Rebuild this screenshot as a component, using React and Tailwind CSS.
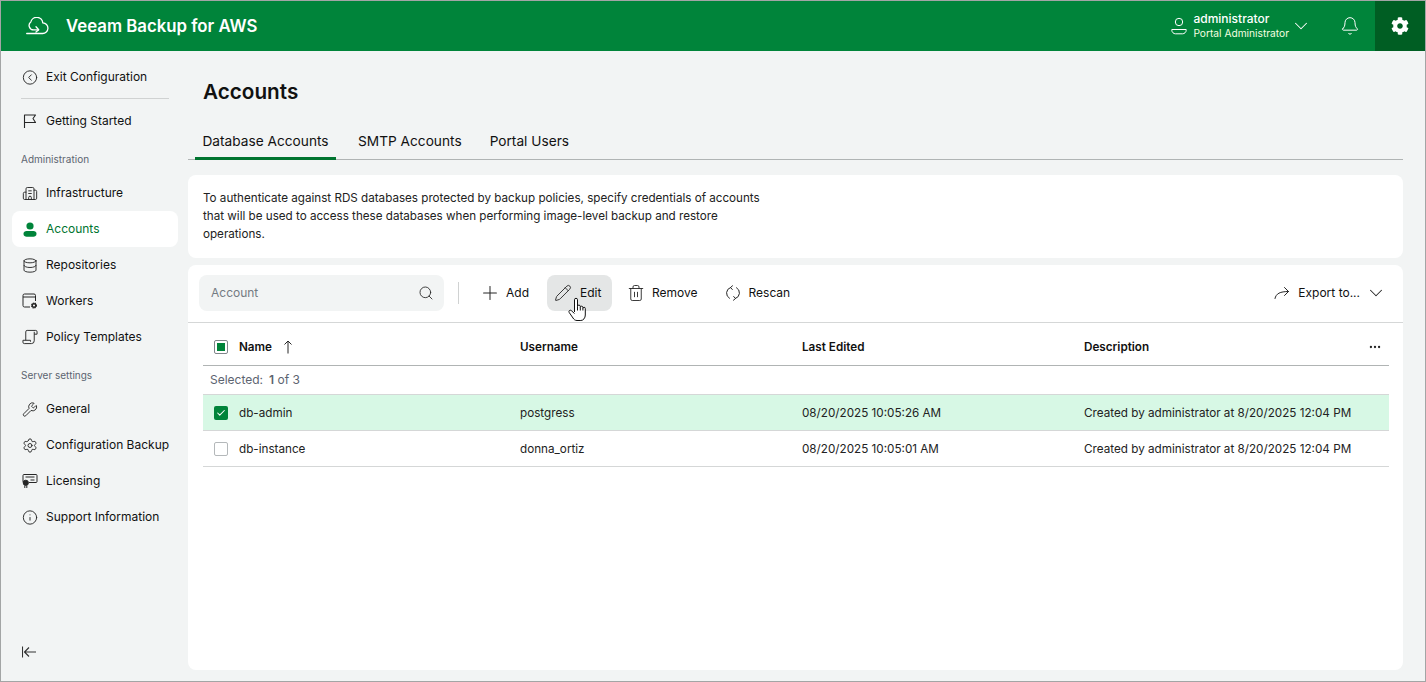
import React from "react";
import {
  Bell,
  Building2,
  Check,
  ChevronDown,
  CircleChevronLeft,
  Database,
  Ellipsis,
  Info,
  Pencil,
  Plus,
  Search,
  Settings,
  Trash2,
  Wrench,
} from "lucide-react";
import { FaCog } from "react-icons/fa";

// Icons the packages don't have in the right shape
const CloudLogo = () => (
  <svg width="23" height="18" viewBox="0 0 23 18" fill="none" stroke="white" strokeWidth="1.300" strokeLinecap="round" strokeLinejoin="round">
    <path d="M.7 16.500H16.500a5.300 5.300 0 0 0 .3-10.600 6.100 6.100 0 0 0-12-1 4.500 4.500 0 0 0 3 8h4.700" />
    <path d="M10 9.800l2.700 3-2.700 2.200" />
  </svg>
);

const FlagIcon = () => (
  <svg width="16" height="16" viewBox="0 0 16 16" fill="none" stroke="#262626" strokeWidth="1.100" strokeLinejoin="round">
    <path d="M2.500 15V2h11l-2.500 3.500 2.500 4h-11" />
  </svg>
);

const PersonFilled = () => (
  <svg width="14" height="15" viewBox="0 0 14 15" fill="#00843a">
    <circle cx="7" cy="4" r="3.600" />
    <path d="M.5 11.500c0-1.600 1.400-2.500 3-2.500h7c1.600 0 3 .9 3 2.500v.5c0 1.700-1.600 2.800-3 2.800h-7c-1.400 0-3-1.100-3-2.800z" />
  </svg>
);

const PersonOutline = () => (
  <svg width="16" height="18" viewBox="0 0 16 18" fill="none" stroke="white" strokeWidth="1">
    <circle cx="8" cy="5" r="3.700" />
    <path d="M.8 12.500h14.400v.7c0 2-1.800 3.600-3.600 3.600H4.400c-1.800 0-3.600-1.600-3.600-3.600z" />
  </svg>
);

const WorkerIcon = () => (
  <svg width="16" height="16" viewBox="0 0 16 16" fill="none" stroke="#262626" strokeWidth="1">
    <path d="M8 14H2.500A1.500 1.500 0 0 1 1 12.500v-10A1.500 1.500 0 0 1 2.500 1h9.500A1.500 1.500 0 0 1 13.500 2.500V8" />
    <path d="M1 4h12.500" />
    <circle cx="12" cy="12.500" r="2.400" fill="#262626" strokeWidth="1.200" strokeDasharray="1.200 .6" />
    <circle cx="12" cy="12.500" r="1" fill="white" stroke="none" />
  </svg>
);

const PolicyIcon = () => (
  <svg width="17" height="16" viewBox="0 0 17 16" fill="none" stroke="#262626" strokeWidth="1" strokeLinejoin="round">
    <path d="M4 11.500V2.500A1.500 1.500 0 0 1 5.500 1h9a1.500 1.500 0 0 1 1.500 1.500V5h-3" />
    <path d="M13 2.500V12a3 3 0 0 1-3 3H2.500A1.500 1.500 0 0 1 1 13.500v-2h8v1.500" />
  </svg>
);

const LicenseIcon = () => (
  <svg width="16" height="16" viewBox="0 0 16 16" fill="none" stroke="#262626" strokeWidth="1">
    <path d="M3 9.500H2A1 1 0 0 1 1 8.500v-6a1 1 0 0 1 1-1h12a1 1 0 0 1 1 1v6a1 1 0 0 1-1 1H7" />
    <path d="M3.500 4h9M8.500 7h4" />
    <circle cx="3.800" cy="9.800" r="2.600" fill="#262626" />
    <path d="M2.800 12.500V15M4.800 12.500V15" />
  </svg>
);

const ExportIcon = () => (
  <svg width="16" height="14" viewBox="0 0 16 14" fill="none" stroke="#262626" strokeWidth="1" strokeLinecap="round" strokeLinejoin="round">
    <path d="M1 12.500C2 7.500 6 5.500 14.500 5.500" />
    <path d="M10.500 1.500l4 4-4 4" />
  </svg>
);

const RescanIcon = () => (
  <svg width="16" height="16" viewBox="0 0 16 16" fill="none" stroke="#262626" strokeWidth="1" strokeLinecap="round" strokeLinejoin="round">
    <path d="M4.500 13.300A6 6 0 0 1 5.500 2.500" />
    <path d="M11.500 2.700a6 6 0 0 1-1 10.800" />
    <path d="M7.500.8 5.500 2.500l1.800 2" />
    <path d="M8.500 15.200l2-1.700-1.800-2" />
  </svg>
);

const CollapseIcon = () => (
  <svg width="14" height="12" viewBox="0 0 14 12" fill="none" stroke="#333" strokeWidth="1.100" strokeLinejoin="round">
    <path d="M.5 .5v11" />
    <path d="M7 1.500 2.500 6 7 10.500M2.500 6H14" />
  </svg>
);

const SortArrow = () => (
  <svg width="10" height="14" viewBox="0 0 10 14" fill="none" stroke="#262626" strokeWidth="1">
    <path d="M5 13.500V1M1.500 4.500 5 1l3.500 3.500" />
  </svg>
);

const HandCursor = ({ className }) => (
  <svg className={className} width="19" height="25" viewBox="0 0 19 25" fill="white" stroke="#111" strokeWidth="1" strokeLinejoin="round">
    <path d="M6.500 15V2.800a1.500 1.500 0 0 1 3 0V9.500a1.400 1.400 0 0 1 2.800 0v1a1.300 1.300 0 0 1 2.600 0v1a1.200 1.200 0 0 1 2.400 0V18c0 3-2 5.500-4.500 5.500H9c-2 0-3-1-4-2.500L1.200 15.500c-1-1.500.8-3 2-2l3.300 3" />
    <path d="M9.500 9.500v4M12.300 10.500v3M14.900 11.500v2" fill="none" />
  </svg>
);

const ic = { size: 17, strokeWidth: 1.400, color: "#262626" };

const NavItem = ({ icon, label, active }) => (
  <div
    className={`flex h-9 items-center gap-2 rounded-lg pl-[10px] whitespace-nowrap ${
      active ? "bg-white text-[#00742f]" : "text-[#111]"
    }`}
  >
    <span className="flex w-4 justify-center">{icon}</span>
    <span>{label}</span>
  </div>
);

const SectionLabel = ({ children, className }) => (
  <div className={`pl-[9px] text-[10px] leading-4 text-[#5c6470] ${className}`}>{children}</div>
);

const ToolButton = ({ icon, label, active, className = "" }) => (
  <div
    className={`flex h-9 items-center gap-2 rounded-lg px-[9px] text-[#111] ${
      active ? "bg-[#e4e6e6]" : ""
    } ${className}`}
  >
    {icon}
    <span>{label}</span>
  </div>
);

const Row = ({ name, username, edited, description, selected }) => (
  <div
    className={`grid h-9 grid-cols-[317px_282px_282px_1fr] items-center border-b border-[#d5d7d7] text-[11.7px] text-[#222] ${
      selected ? "bg-[#d7f8e5]" : ""
    }`}
  >
    <div className="flex items-center gap-[11px] pl-[11px]">
      {selected ? (
        <span className="flex size-[14px] items-center justify-center rounded-[2px] bg-[#00843a]">
          <Check size={10} color="white" strokeWidth={2.500} />
        </span>
      ) : (
        <span className="size-[14px] rounded-[2px] border border-[#b4b8ba] bg-white" />
      )}
      <span>{name}</span>
    </div>
    <div>{username}</div>
    <div>{edited}</div>
    <div>{description}</div>
  </div>
);

export default function App() {
  return (
    <div className="flex h-[682px] w-[1426px] flex-col overflow-hidden border border-[#a3a5a5] bg-[#f2f4f4] font-['Inter',sans-serif] text-[12px] leading-4">
      {/* Top bar */}
      <header className="flex h-[50px] shrink-0 items-center bg-[#00843a] text-white">
        <span className="ml-[25px]">
          <CloudLogo />
        </span>
        <span className="ml-[17px] text-[16.8px] font-semibold">Veeam Backup for AWS</span>
        <div className="ml-auto flex h-full items-center">
          <PersonOutline />
          <div className="ml-[6px] flex flex-col">
            <span className="text-[12px] leading-[15px] font-medium">administrator</span>
            <span className="text-[10.2px] leading-[15px] text-[#f4ffe0]">Portal Administrator</span>
          </div>
          <ChevronDown className="ml-px" size={22} strokeWidth={1.100} color="white" />
          <Bell className="ml-[28px]" size={20} strokeWidth={1.200} color="white" />
          <div className="ml-[15px] flex h-full w-[50px] items-center justify-center bg-[#005e23]">
            <FaCog size={18} color="white" />
          </div>
        </div>
      </header>

      <div className="flex min-h-0 flex-1">
        {/* Sidebar */}
        <aside className="flex w-[187px] shrink-0 flex-col pt-2 pr-[10px] pb-[23px] pl-[11px]">
          <NavItem icon={<CircleChevronLeft {...ic} />} label="Exit Configuration" />
          <div className="mx-[9px] mt-[3px] border-t border-[#d0d2d2]" />
          <div className="mt-1">
            <NavItem icon={<FlagIcon />} label="Getting Started" />
          </div>
          <SectionLabel className="mt-3 mb-2">Administration</SectionLabel>
          <NavItem icon={<Building2 {...ic} />} label="Infrastructure" />
          <NavItem icon={<PersonFilled />} label="Accounts" active />
          <NavItem icon={<Database {...ic} />} label="Repositories" />
          <NavItem icon={<WorkerIcon />} label="Workers" />
          <NavItem icon={<PolicyIcon />} label="Policy Templates" />
          <SectionLabel className="mt-3 mb-2">Server settings</SectionLabel>
          <NavItem icon={<Wrench {...ic} />} label="General" />
          <NavItem icon={<Settings {...ic} />} label="Configuration Backup" />
          <NavItem icon={<LicenseIcon />} label="Licensing" />
          <NavItem icon={<Info {...ic} />} label="Support Information" />
          <div className="mt-auto pl-[10px]">
            <CollapseIcon />
          </div>
        </aside>

        {/* Main */}
        <main className="flex min-w-0 flex-1 flex-col pr-[22px] pb-[11px]">
          <h1 className="mt-[27px] pl-[15px] text-[20.7px] leading-[28px] font-semibold text-[#111]">Accounts</h1>
          <div className="mt-[13px] flex h-[41px] items-end gap-[14px] border-b border-[#b0b4b4]">
            <div className="ml-[7px] -mb-px flex h-[41px] w-[141px] items-center justify-center border-b-[3px] border-[#00742f] pt-[6px] text-[13.7px] text-[#111]">
              Database Accounts
            </div>
            <div className="flex h-[41px] items-center px-2 pt-1 text-[13.7px] text-[#111]">SMTP Accounts</div>
            <div className="flex h-[41px] items-center px-[6px] pt-1 text-[13.7px] text-[#111]">Portal Users</div>
          </div>

          <div className="mt-[15px] h-[83px] shrink-0 rounded-lg bg-white px-[15px] pt-[14px] text-[11.65px] leading-[18px] text-[#222]">
            <p className="w-[570px]">
              To authenticate against RDS databases protected by backup policies, specify credentials of accounts that
              will be used to access these databases when performing image-level backup and restore operations.
            </p>
          </div>

          <section className="mt-[7px] min-h-0 flex-1 rounded-lg bg-white">
            <div className="flex h-[58px] items-center border-b border-[#d5d7d7] pr-4 pb-px pl-[11px]">
              <div className="flex h-9 w-[245px] items-center justify-between rounded-lg bg-[#f2f4f4] pr-[10px] pl-[12px] text-[#747b82]">
                <span>Account</span>
                <Search size={16} strokeWidth={1.300} color="#262626" />
              </div>
              <div className="mx-[14px] h-[22px] border-l border-[#d0d2d2]" />
              <ToolButton icon={<Plus className="-mx-[3px]" size={22} strokeWidth={1.100} color="#262626" />} label="Add" />
              <div className="relative ml-[9px]">
                <ToolButton icon={<Pencil className="-mx-[1.5px]" size={18} strokeWidth={1.200} color="#262626" />} label="Edit" active className="w-[65px] gap-[9px]" />
                <HandCursor className="absolute top-[22px] left-[21px]" />
              </div>
              <ToolButton icon={<Trash2 className="-mx-[1px]" size={18} strokeWidth={1.200} color="#262626" />} label="Remove" className="ml-[7px]" />
              <ToolButton icon={<RescanIcon />} label="Rescan" className="ml-[9px]" />
              <div className="ml-auto flex items-center gap-2 text-[#111]">
                <ExportIcon />
                <span>Export to...</span>
                <ChevronDown className="-ml-[3px]" size={22} strokeWidth={1.100} color="#262626" />
              </div>
            </div>

            <div className="mr-[14px] ml-[15px]">
              <div className="grid h-[43px] grid-cols-[317px_282px_282px_1fr] items-center border-b border-[#b0b4b4] pt-[6px] text-[11.7px] font-semibold text-[#111]">
                <div className="flex items-center gap-[11px] pl-[11px]">
                  <span className="flex size-[14px] items-center justify-center rounded-[2px] border border-[#80868a] bg-white">
                    <span className="size-2 bg-[#00843a]" />
                  </span>
                  <span>Name</span>
                  <SortArrow />
                </div>
                <div>Username</div>
                <div>Last Edited</div>
                <div className="flex items-center justify-between pr-[7px]">
                  <span>Description</span>
                  <Ellipsis size={14} strokeWidth={2} color="#262626" />
                </div>
              </div>
              <div className="flex h-[29px] items-center gap-[6px] border-b border-[#d5d7d7] pl-[7px] text-[#5c6470]">
                <span>Selected:</span>
                <span>
                  <span className="font-semibold">1</span> of 3
                </span>
              </div>
              <Row name="db-admin" username="postgress" edited="08/20/2025 10:05:26 AM" description="Created by administrator at 8/20/2025 12:04 PM" selected />
              <Row name="db-instance" username="donna_ortiz" edited="08/20/2025 10:05:01 AM" description="Created by administrator at 8/20/2025 12:04 PM" />
            </div>
          </section>
        </main>
      </div>
    </div>
  );
}
